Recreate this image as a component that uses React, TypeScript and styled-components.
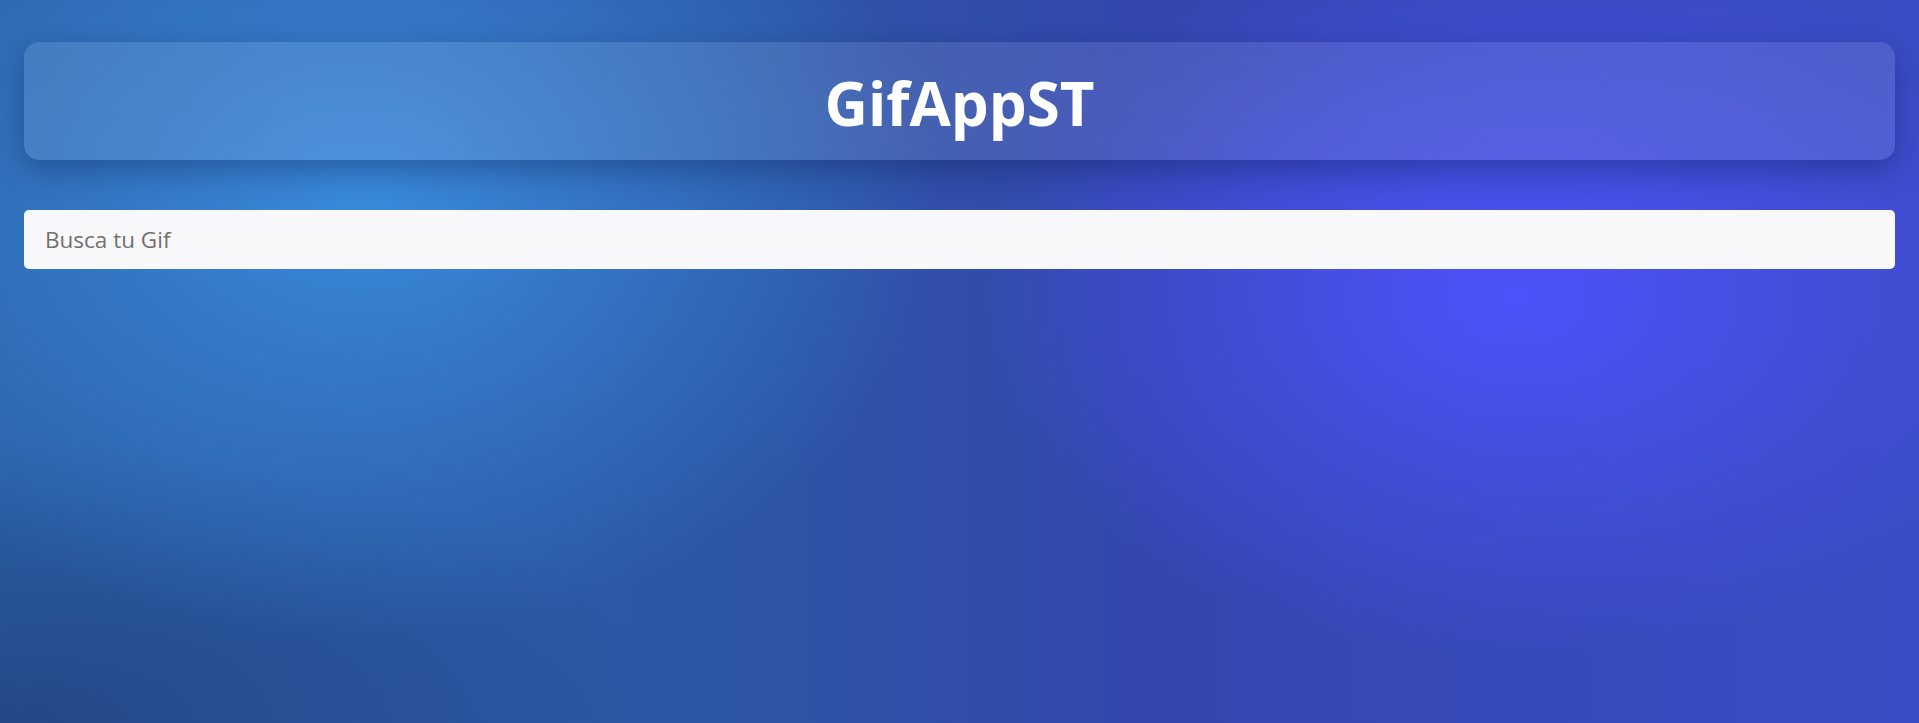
import styled, { createGlobalStyle } from "styled-components";

const GlobalStyle = createGlobalStyle`
  * {
    box-sizing: border-box;
  }
  html, body {
    margin: 0;
    padding: 0;
  }
  body {
    font-family: "Open Sans", "Noto Sans", sans-serif;
  }
`;

const Page = styled.div`
  min-height: 100vh;
  padding: 42px 24px 40px 24px;
  display: flex;
  flex-direction: column;
  gap: 50px;
  background:
    radial-gradient(ellipse 30% 60% at 19% 28%, rgba(58, 140, 222, 0.95) 0%, rgba(58, 140, 222, 0) 100%),
    radial-gradient(ellipse 28% 50% at 79% 41%, rgba(78, 82, 250, 1) 0%, rgba(78, 82, 250, 0) 100%),
    radial-gradient(ellipse 35% 40% at 0% 100%, rgba(28, 50, 110, 0.55) 0%, rgba(28, 50, 110, 0) 100%),
    linear-gradient(90deg, #2c62a8 0%, #2d55a4 40%, #3447b0 60%, #3a4dc4 100%);
`;

const Header = styled.header`
  height: 118px;
  border-radius: 15px;
  display: flex;
  align-items: center;
  justify-content: center;
  background: rgba(255, 255, 255, 0.1);
  backdrop-filter: blur(20px);
  box-shadow: 0 10px 30px rgba(10, 20, 70, 0.35);
`;

const Title = styled.h1`
  margin: 4px 0 0;
  color: #ffffff;
  font-size: 60px;
  font-weight: 700;
  line-height: 1;
`;

const SearchInput = styled.input`
  height: 59px;
  width: 100%;
  border: none;
  border-radius: 5px;
  background: #f8f8fa;
  padding: 0 18px 0 21px;
  font-family: "Open Sans", "Noto Sans", sans-serif;
  font-size: 22.5px;
  color: #333;
  outline: none;
  &::placeholder {
    color: #75706c;
  }
`;

export default function App() {
  return (
    <>
      <GlobalStyle />
      <Page>
        <Header>
          <Title>GifAppST</Title>
        </Header>
        <SearchInput type="text" placeholder="Busca tu Gif" />
      </Page>
    </>
  );
}
